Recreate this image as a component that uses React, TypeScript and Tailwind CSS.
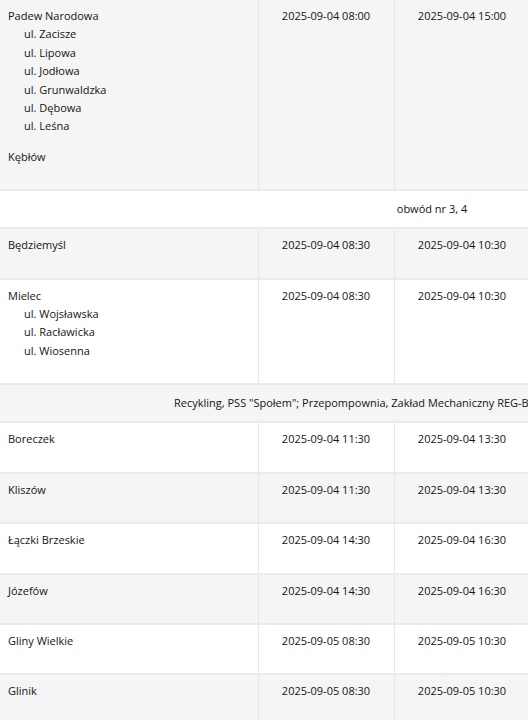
import React from "react";

type Row =
    | { kind: "place"; name: string; streets?: string[]; extra?: string; from: string; to: string }
    | { kind: "note"; text: string; pad?: string };

const rows: Row[] = [
    {
        kind: "place",
        name: "Padew Narodowa",
        streets: ["ul. Zacisze", "ul. Lipowa", "ul. Jodłowa", "ul. Grunwaldzka", "ul. Dębowa", "ul. Leśna"],
        extra: "Kębłów",
        from: "2025-09-04 08:00",
        to: "2025-09-04 15:00",
    },
    { kind: "note", text: "obwód nr 3, 4" },
    { kind: "place", name: "Będziemyśl", from: "2025-09-04 08:30", to: "2025-09-04 10:30" },
    {
        kind: "place",
        name: "Mielec",
        streets: ["ul. Wojsławska", "ul. Racławicka", "ul. Wiosenna"],
        from: "2025-09-04 08:30",
        to: "2025-09-04 10:30",
    },
    { kind: "note", text: 'Recykling, PSS "Społem"; Przepompownia, Zakład Mechaniczny REG-BUD', pad: "text-left pl-[174px]" },
    { kind: "place", name: "Boreczek", from: "2025-09-04 11:30", to: "2025-09-04 13:30" },
    { kind: "place", name: "Kliszów", from: "2025-09-04 11:30", to: "2025-09-04 13:30" },
    { kind: "place", name: "Łączki Brzeskie", from: "2025-09-04 14:30", to: "2025-09-04 16:30" },
    { kind: "place", name: "Józefów", from: "2025-09-04 14:30", to: "2025-09-04 16:30" },
    { kind: "place", name: "Gliny Wielkie", from: "2025-09-05 08:30", to: "2025-09-05 10:30" },
    { kind: "place", name: "Glinik", from: "2025-09-05 08:30", to: "2025-09-05 10:30" },
];

const App = () => {
    return (
        <div className="w-[528px] h-[720px] overflow-hidden bg-white">
            <table
                className="w-[864px] border-collapse text-[11px] leading-[18.4px] text-[#141414]"
                style={{ fontFamily: '"Open Sans", "Noto Sans", sans-serif' }}
            >
                <colgroup>
                    <col className="w-[258px]" />
                    <col className="w-[136px]" />
                    <col className="w-[136px]" />
                    <col />
                </colgroup>
                <tbody>
                    {rows.map((row, i) => {
                        const bg = i % 2 === 0 ? "bg-[#f5f5f5]" : "bg-white";
                        if (row.kind === "note") {
                            return (
                                <tr key={i} className={`${bg} border-b-2 border-[#ebebeb]`}>
                                    <td
                                        colSpan={4}
                                        className={`h-[38px] align-middle whitespace-nowrap ${row.pad ?? "text-center px-2"}`}
                                    >
                                        {row.text}
                                    </td>
                                </tr>
                            );
                        }
                        return (
                            <tr key={i} className={`${bg} border-b-2 border-[#ebebeb]`}>
                                <td className="pl-2 pr-2 pt-[7px] pb-[23px] align-top border-r border-[#e6e6e6]">
                                    <div>{row.name}</div>
                                    {row.streets && (
                                        <ul className="pl-4">
                                            {row.streets.map((s) => (
                                                <li key={s}>{s}</li>
                                            ))}
                                        </ul>
                                    )}
                                    {row.extra && <div className="mt-[12px]">{row.extra}</div>}
                                </td>
                                <td className="px-2 pt-[7px] align-top text-center border-r border-[#e6e6e6]">
                                    {row.from}
                                </td>
                                <td className="px-2 pt-[7px] align-top text-center border-r border-[#e6e6e6]">
                                    {row.to}
                                </td>
                                <td className="px-2 pt-[7px] align-top"></td>
                            </tr>
                        );
                    })}
                </tbody>
            </table>
        </div>
    );
};

export default App;
